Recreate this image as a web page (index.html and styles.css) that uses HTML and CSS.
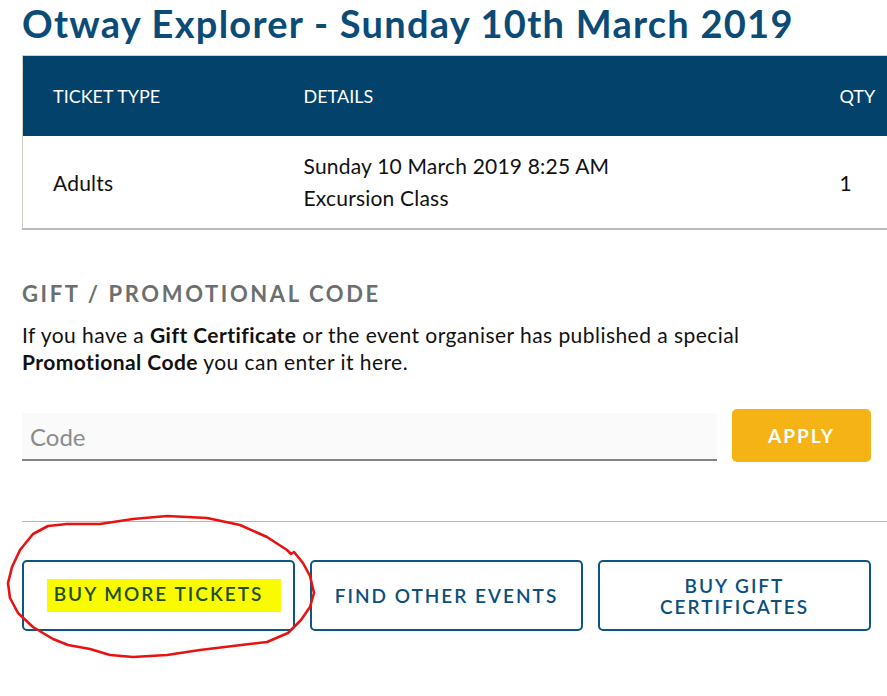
FILE: index.html
```html
<!DOCTYPE html>
<html lang="en">
<head>
<meta charset="utf-8">
<title>Otway Explorer - Sunday 10th March 2019</title>
<link rel="stylesheet" href="styles.css">
</head>
<body>
<div class="page">
  <h1 class="title">Otway Explorer - Sunday 10th March 2019</h1>

  <div class="table-wrap">
    <table class="tickets">
      <colgroup>
        <col class="c-type">
        <col class="c-details">
        <col class="c-qty">
      </colgroup>
      <thead>
        <tr>
          <th class="cell-type">TICKET TYPE</th>
          <th>DETAILS</th>
          <th>QTY</th>
        </tr>
      </thead>
      <tbody>
        <tr>
          <td class="cell-type">Adults</td>
          <td class="details">Sunday 10 March 2019 8:25 AM<br>Excursion Class</td>
          <td>1</td>
        </tr>
      </tbody>
    </table>
  </div>

  <section class="promo">
    <h2 class="promo-title">GIFT / PROMOTIONAL CODE</h2>
    <p class="promo-text">If you have a <strong>Gift Certificate</strong> or the event organiser has published a special<br><strong>Promotional Code</strong> you can enter it here.</p>
    <form class="promo-form">
      <input class="code-input" type="text" placeholder="Code">
      <button class="apply" type="button">APPLY</button>
    </form>
  </section>

  <hr class="divider">

  <div class="actions">
    <a class="btn" href="#"><span class="highlight">BUY MORE TICKETS</span></a>
    <a class="btn" href="#">FIND OTHER EVENTS</a>
    <a class="btn" href="#">BUY GIFT<br>CERTIFICATES</a>
  </div>

  <svg class="annotation" width="887" height="696" viewBox="0 0 887 696" aria-hidden="true">
    <path d="M48 526 L67 524 L100 524 L133 519 L167 516 L207 518 L240 525 L267 537 L287 550 L291 554 L294 552 L303 563 L310 576 L314 593 L310 607 L301 620 L288 633 L267 642 L233 646 L200 650 L167 655 L133 657 L110 655 L90 649 L68 645 L53 639 L33 627 L18 613 L10 598 L8 583 L12 567 L20 550 L33 534 L48 526" />
  </svg>
</div>
</body>
</html>
```

FILE: styles.css
```css
html, body {
  margin: 0;
  padding: 0;
  background: #ffffff;
  overflow: hidden;
}

body {
  font-family: "Lato", "Open Sans", sans-serif;
  color: #1a1a1a;
}

.page {
  position: relative;
  padding: 0 0 0 22px;
  width: 865px;
  height: 696px;
}

.title {
  margin: 0 0 9px 0;
  font-size: 38px;
  line-height: 46px;
  font-weight: 700;
  letter-spacing: 1.25px;
  color: #0b4b77;
  white-space: nowrap;
}

.table-wrap {
  width: 880px;
}

.tickets {
  width: 880px;
  table-layout: fixed;
  border-collapse: collapse;
  border-top: 1px solid #d3d0c4;
  border-left: 1px solid #cfccc0;
  border-bottom: 2px solid #bababa;
}

.c-type { width: 281px; }
.c-details { width: 536px; }
.c-qty { width: 63px; }

.tickets th {
  background: #03426a;
  color: #ffffff;
  font-size: 18px;
  font-weight: 400;
  text-align: left;
  height: 80px;
  padding: 0;
  vertical-align: middle;
}

.tickets td {
  font-size: 21px;
  letter-spacing: 0.2px;
  height: 92px;
  padding: 0;
  vertical-align: middle;
  color: #111;
}

.tickets .cell-type {
  padding-left: 30px;
}

.tickets .details {
  line-height: 32px;
}

.promo {
  padding-top: 51px;
}

.promo-title {
  margin: 0 0 14px 0;
  font-size: 22px;
  line-height: 26px;
  font-weight: 700;
  letter-spacing: 2.6px;
  color: #6b6f6f;
}

.promo-text {
  margin: 0 0 34px 0;
  font-size: 21px;
  line-height: 27px;
  letter-spacing: 0.45px;
  color: #111;
  white-space: nowrap;
}

.promo-text strong {
  font-weight: 700;
}

.promo-form {
  display: flex;
  align-items: flex-end;
  gap: 15px;
  margin: 0;
}

.code-input {
  box-sizing: border-box;
  width: 695px;
  height: 48px;
  border: 0;
  border-bottom: 2px solid #808283;
  background: #fafafa;
  padding: 0 8px;
  font-family: "Lato", sans-serif;
  font-size: 24px;
  color: #333;
  outline: none;
}

.code-input::placeholder {
  color: #8a8c8c;
}

.apply {
  box-sizing: border-box;
  width: 139px;
  height: 53px;
  margin-bottom: -1px;
  border: 0;
  border-radius: 5px;
  background: #f5b316;
  color: #ffffff;
  font-family: "Lato", sans-serif;
  font-size: 19px;
  font-weight: 700;
  letter-spacing: 2px;
}

.divider {
  margin: 60px 0 0 0;
  width: 880px;
  border: 0;
  border-top: 1px solid #b5b5b5;
  height: 0;
}

.actions {
  display: flex;
  gap: 15px;
  margin-top: 38px;
  width: 849px;
}

.btn {
  box-sizing: border-box;
  flex: 1 1 0;
  height: 71px;
  display: flex;
  align-items: center;
  justify-content: center;
  text-align: center;
  border: 2px solid #0d5585;
  border-radius: 5px;
  color: #0b4f7e;
  text-decoration: none;
  font-size: 19px;
  font-weight: 600;
  line-height: 21px;
  letter-spacing: 2px;
}

.highlight {
  display: inline-block;
  background: #fbfb00;
  color: #1d4f22;
  padding: 4px 18px 8px 7px;
  margin-left: 11px;
}

.annotation {
  position: absolute;
  left: 0;
  top: 0;
  pointer-events: none;
}

.annotation path {
  fill: none;
  stroke: #e81212;
  stroke-width: 2.6;
  stroke-linejoin: round;
  stroke-linecap: round;
}
```
